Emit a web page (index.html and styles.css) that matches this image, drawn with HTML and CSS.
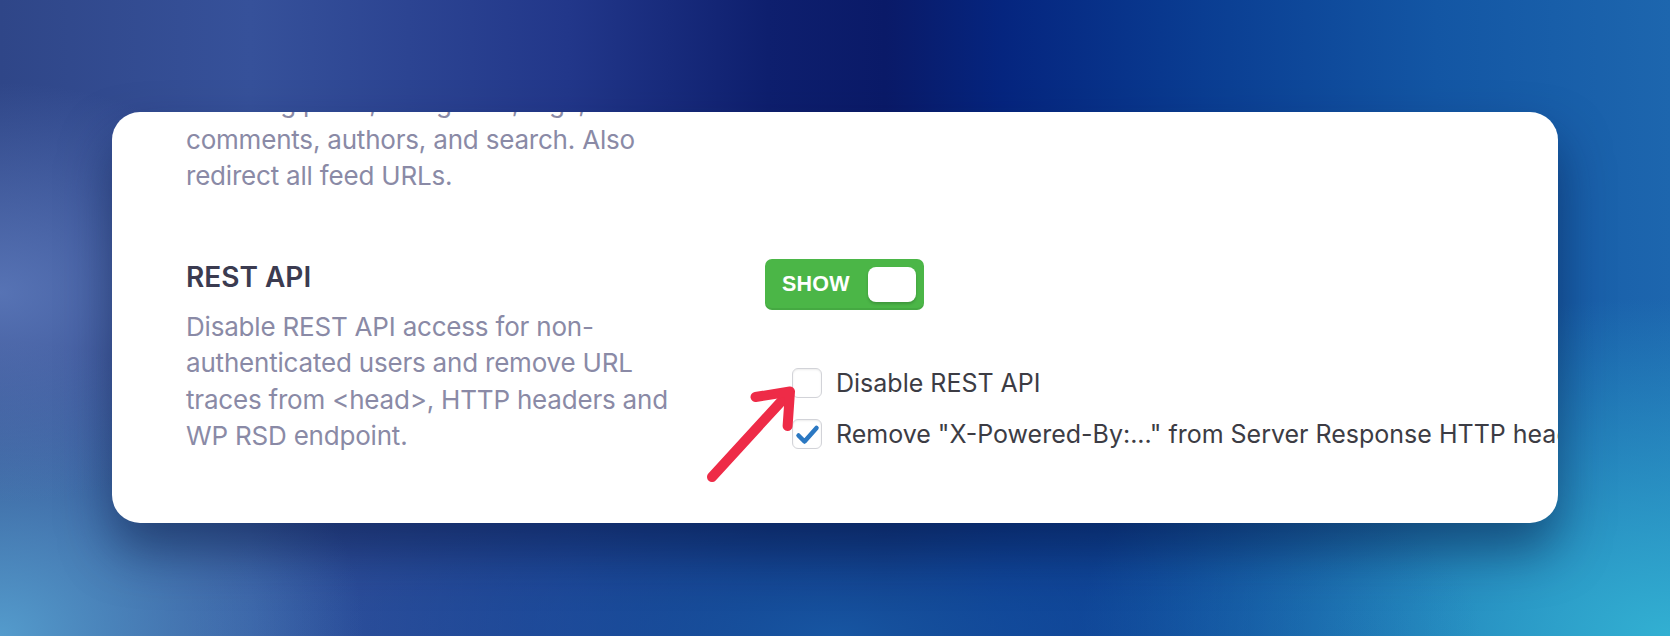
FILE: index.html
```html
<!DOCTYPE html>
<html lang="en">
<head>
<meta charset="utf-8">
<title>REST API setting</title>
<link rel="stylesheet" href="styles.css">
</head>
<body>
<div class="stage">
  <div class="card">
    <div class="row row-prev">
      <div class="label-col">
        <p class="desc">including posts, categories, tags,<br>comments, authors, and search. Also<br>redirect all feed URLs.</p>
      </div>
    </div>
    <div class="row row-rest">
      <div class="label-col">
        <h3 class="title">REST API</h3>
        <p class="desc desc-rest">Disable REST API access for non-<br>authenticated users and remove URL<br>traces from &lt;head&gt;, HTTP headers and<br>WP RSD endpoint.</p>
      </div>
      <div class="control-col">
        <div class="toggle"><span class="toggle-text">SHOW</span><span class="knob"></span></div>
        <ul class="checks">
          <li class="check-row"><span class="cb"></span><span class="check-label">Disable REST API</span></li>
          <li class="check-row"><span class="cb"><svg class="tick" viewBox="0 0 30 30"><path d="M6.5 16.5 L12.5 22.5 L24.5 9"/></svg></span><span class="check-label">Remove "X-Powered-By:..." from Server Response HTTP headers</span></li>
        </ul>
      </div>
    </div>
    <svg class="arrow" viewBox="0 0 1446 411" width="1446" height="411">
      <path d="M600 365 L677 281"/>
      <path d="M643.5 285 L678 279.5 L675.6 314"/>
    </svg>
  </div>
</div>
</body>
</html>
```
FILE: styles.css
```css
* { box-sizing: border-box; }
html, body { margin: 0; padding: 0; }
body { width: 1670px; height: 636px; overflow: hidden; }

.stage {
  width: 1670px;
  height: 636px;
  padding: 112px 0 0 112px;
  background:
    radial-gradient(420px 300px at 0% 46%, rgba(100,130,195,0.75), rgba(100,130,195,0) 70%),
    radial-gradient(520px 420px at 0% 100%, rgba(86,160,208,0.95), rgba(86,160,208,0) 70%),
    radial-gradient(900px 330px at 50% 100%, rgba(24,92,168,0.9), rgba(24,92,168,0) 72%),
    radial-gradient(820px 470px at 100% 100%, rgba(50,176,210,1), rgba(50,176,210,0) 72%),
    linear-gradient(90deg, #2f4688 0%, #36519a 15%, #22378a 34%, #0e1f6e 46%, #0a1a68 53%, #05257f 60%, #0a3d92 72%, #1356a4 86%, #1d66ae 100%);
}

.card {
  position: relative;
  width: 1446px;
  height: 411px;
  background: #ffffff;
  border-radius: 28px;
  overflow: hidden;
  padding-left: 74px;
  box-shadow: 0 28px 50px rgba(6, 22, 64, 0.5);
  font-family: Inter, "Noto Sans", sans-serif;
}

.row {
  display: grid;
  grid-template-columns: 579px 1fr;
}

.row-prev { margin-top: -27px; }
.row-rest { margin-top: 64px; }

.desc {
  margin: 0;
  font-size: 26px;
  line-height: 36.5px;
  letter-spacing: -0.2px;
  color: #8a8aa6;
  white-space: nowrap;
}

.title {
  margin: 2px 0 0;
  font-size: 28px;
  line-height: 32px;
  font-weight: 600;
  color: #3b3b50;
}

.desc-rest { margin-top: 16px; }

.control-col {
  display: flex;
  flex-direction: column;
  align-items: flex-start;
}

.toggle {
  width: 159px;
  height: 51px;
  border-radius: 7px;
  background: #4bb647;
  box-shadow: inset 0 -2px 0 rgba(0, 0, 0, 0.07);
  display: flex;
  align-items: center;
  justify-content: space-between;
  padding: 0 8px 0 17px;
}

.toggle-text {
  font-family: "Liberation Sans", Arial, sans-serif;
  font-weight: 700;
  font-size: 21.5px;
  color: #ffffff;
  letter-spacing: 0.2px;
}

.knob {
  width: 48px;
  height: 35px;
  border-radius: 8px;
  background: #ffffff;
  box-shadow: 0 2px 3px rgba(0, 0, 0, 0.18);
}

.checks {
  list-style: none;
  margin: 58px 0 0 27px;
  padding: 0;
  display: flex;
  flex-direction: column;
  gap: 21px;
}

.check-row {
  display: flex;
  align-items: center;
  height: 30px;
  gap: 14px;
  white-space: nowrap;
}

.cb {
  flex: none;
  width: 30px;
  height: 30px;
  border: 1.5px solid #d2d3d8;
  border-radius: 6px;
  background: #ffffff;
  box-shadow: inset 0 1px 2px rgba(0, 0, 0, 0.08);
  display: flex;
  align-items: center;
  justify-content: center;
}

.tick {
  width: 30px;
  height: 30px;
  flex: none;
  margin: -1.5px;
}
.tick path {
  fill: none;
  stroke: #2b78c2;
  stroke-width: 4.5;
  stroke-linecap: round;
  stroke-linejoin: round;
}

.check-label {
  font-size: 25px;
  line-height: 30px;
  color: #3c3c44;
}

.arrow {
  position: absolute;
  left: 0;
  top: 0;
  pointer-events: none;
}
.arrow path {
  fill: none;
  stroke: #ee2b47;
  stroke-width: 10;
  stroke-linecap: round;
  stroke-linejoin: round;
}
```
